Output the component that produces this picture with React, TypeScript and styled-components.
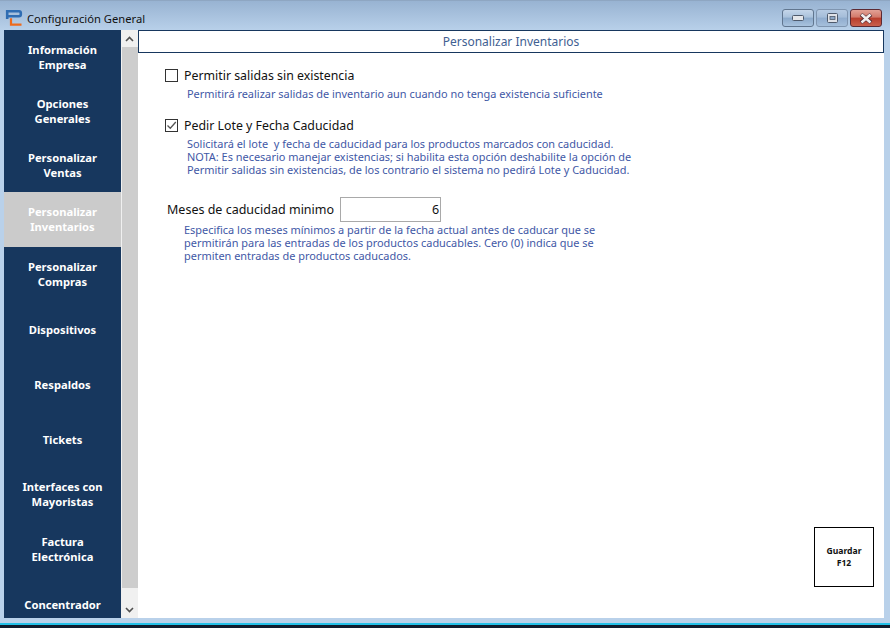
import React from "react";
import styled, { createGlobalStyle } from "styled-components";

const Global = createGlobalStyle`
  html, body { margin: 0; padding: 0; height: 100%; overflow: hidden; background: #0f1b2d; }
  #root { height: 628px; }
  * { box-sizing: border-box; }
`;

const Win = styled.div`
  width: 890px; height: 628px; display: flex; flex-direction: column;
  font-family: "Noto Sans", "DejaVu Sans", sans-serif; overflow: hidden;
`;
const Frame = styled.div`
  height: 623px; display: flex; flex-direction: column; padding: 0 6px 5px 4px;
  background: linear-gradient(180deg, #98b3d2 0, #b9d1ea 30px, #b9d1ea 100%);
  border-top: 1px solid #8ea6c2;
`;
const Taskline = styled.div`
  height: 2px; background: #22c0e8;
`;
const TitleBar = styled.div`
  height: 29px; display: flex; align-items: flex-start; flex: none; margin-left: 1px; gap: 4px;
`;
const Logo = styled.svg`
  flex: none; margin-top: 9px;
`;
const Title = styled.span`
  font-size: 11.2px; line-height: 16px; margin-top: 10px; color: #111; font-family: "Noto Sans", sans-serif; flex: 1;
`;
const Controls = styled.div`
  display: flex; gap: 2px; margin-top: 8px; margin-right: 2px;
`;
const Ctl = styled.div<{ $kind: "min" | "max" | "close" }>`
  width: 32px; height: 18px; border-radius: 3px;
  display: flex; align-items: center; justify-content: center;
  border: 1px solid ${(p) => (p.$kind === "close" ? "#5c2a33" : p.$kind === "min" ? "#61768f" : "#7f95b0")};
  background: ${(p) =>
    p.$kind === "close"
      ? "linear-gradient(180deg,#e2a196 0,#d2796a 45%,#b83d2c 50%,#c9604c 100%)"
      : p.$kind === "min"
      ? "linear-gradient(180deg,#c5d6ea 0,#aac2dc 45%,#8ba9ca 50%,#a9c3de 100%)"
      : "linear-gradient(180deg,#b7cbe3 0,#a5bdd9 45%,#90acce 50%,#a5bfdb 100%)"};
`;
const Body = styled.div`
  flex: 1; display: flex; min-height: 0;
`;
const Sidebar = styled.nav`
  width: 117px; flex: none; background: #17375e; overflow: hidden; display: flex; flex-direction: column;
`;
const Item = styled.div<{ $active?: boolean; $h: number; $nudge: number }>`
  flex: none; height: ${(p) => p.$h}px; display: flex; align-items: center; justify-content: center;
  text-align: center; font-weight: 700; font-size: 11.2px; line-height: 15px;
  padding: ${(p) => (p.$nudge > 0 ? p.$nudge : 0)}px 2px ${(p) => (p.$nudge < 0 ? -p.$nudge : 0)}px;
  font-family: "Noto Sans", sans-serif;
  color: #fff;
  background: ${(p) => (p.$active ? "#cbcbcb" : "transparent")};
`;
const Scroll = styled.div`
  width: 17px; flex: none; background: #f0f0f0; display: flex; flex-direction: column; align-items: stretch;
`;
const Arrow = styled.div`
  height: 17px; flex: none; display: flex; align-items: center; justify-content: center;
`;
const Thumb = styled.div`
  flex: 1; background: #cdcdcd; margin: 0 0 13px 1px;
`;
const Main = styled.main`
  flex: 1; min-width: 0; background: #fff; display: flex; flex-direction: column;
`;
const Header = styled.div`
  height: 23px; flex: none; border: 1px solid #17375e; color: #3f5f92; font-size: 12px;
  display: flex; align-items: center; justify-content: center;
`;
const Content = styled.div`
  flex: 1; display: flex; flex-direction: column; padding: 13px 10px 31px 27px; min-height: 0;
`;
const CheckRow = styled.div`
  display: flex; align-items: center; gap: 6px; height: 18px; font-size: 12.35px; color: #111;
`;
const Box = styled.span`
  width: 13px; height: 13px; border: 1px solid #333; background: #fff; display: flex; flex: none; align-items: center; justify-content: center;
`;
const Help = styled.p<{ $indent: number; $top: number; $bottom: number }>`
  margin: ${(p) => p.$top}px 0 ${(p) => p.$bottom}px ${(p) => p.$indent}px; font-size: 10.95px; line-height: 13px;
  color: #3f58a6; white-space: pre;
`;
const FieldRow = styled.div`
  display: flex; align-items: center; margin-left: 2px; gap: 6px; font-size: 12.5px; color: #111; height: 25px;
`;
const Input = styled.div`
  width: 101px; height: 25px; border: 1px solid #a9a9a9; background: #fff; display: flex; align-items: center;
  justify-content: flex-end; padding-right: 1px; font-size: 12.5px; color: #111;
`;
const Save = styled.button`
  margin-top: auto; align-self: flex-end; width: 60px; height: 60px; background: #fff; border: 1px solid #000;
  font: 700 8.6px/12px "Noto Sans", sans-serif; color: #111; padding: 0;
`;

const items: [string, number, number, boolean?][] = [
  ["Información\nEmpresa", 54, 0], ["Opciones\nGenerales", 54, 0], ["Personalizar\nVentas", 54, 0],
  ["Personalizar\nInventarios", 55, -2, true], ["Personalizar\nCompras", 54, 0], ["Dispositivos", 55, 2],
  ["Respaldos", 55, 2], ["Tickets", 55, 2], ["Interfaces con\nMayoristas", 55, 0], ["Factura\nElectrónica", 55, 0], ["Concentrador", 55, 2],
];

const Multi = ({ t }: { t: string }) => (
  <span>{t.split("\n").map((l, i) => <React.Fragment key={i}>{i > 0 && <br />}{l}</React.Fragment>)}</span>
);

export default function App() {
  return (
    <Win>
      <Global />
      <Frame>
        <TitleBar>
          <Logo width="18" height="18" viewBox="0 0 18 18" fill="none">
            <path d="M2.2 9V1.3H14Q15.8 1.3 15.8 3V4.6Q15.8 6.3 14 6.3H2.2" stroke="#2f6db3" strokeWidth="2.6" />
            <path d="M6 8.2V14.6H16.5" stroke="#ee6a1c" strokeWidth="2.2" />
          </Logo>
          <Title>Configuración General</Title>
          <Controls>
            <Ctl $kind="min">
              <svg width="12" height="6" viewBox="0 0 12 6"><rect x=".5" y=".5" width="11" height="5" rx="1" fill="#e4e6ea" stroke="#4e5a6c" /></svg>
            </Ctl>
            <Ctl $kind="max">
              <svg width="11" height="10" viewBox="0 0 11 10"><rect x=".5" y=".5" width="10" height="9" rx="1" fill="#dfe2e8" stroke="#4e5a6c" /><rect x="3" y="3.5" width="5" height="3" fill="#8da7c6" stroke="#4e5a6c" strokeWidth=".8" /></svg>
            </Ctl>
            <Ctl $kind="close">
              <svg width="14" height="11" viewBox="0 0 14 11"><path d="M2 1.5L12 9.5M12 1.5L2 9.5" stroke="#4a2630" strokeWidth="4" /><path d="M2.5 1.5L11.5 9.5M11.5 1.5L2.5 9.5" stroke="#f3eeee" strokeWidth="2.6" /></svg>
            </Ctl>
          </Controls>
        </TitleBar>
        <Body>
          <Sidebar>
            {items.map(([t, h, n, a]) => (
              <Item key={t} $h={h} $nudge={n} $active={a}><Multi t={t} /></Item>
            ))}
          </Sidebar>
          <Scroll>
            <Arrow><svg width="9" height="6" viewBox="0 0 9 6"><path d="M1 5L4.5 1.5L8 5" fill="none" stroke="#505050" strokeWidth="1.6" /></svg></Arrow>
            <Thumb />
            <Arrow><svg width="9" height="6" viewBox="0 0 9 6"><path d="M1 1L4.5 4.5L8 1" fill="none" stroke="#505050" strokeWidth="1.6" /></svg></Arrow>
          </Scroll>
          <Main>
            <Header>Personalizar Inventarios</Header>
            <Content>
              <CheckRow><Box />Permitir salidas sin existencia</CheckRow>
              <Help $indent={22} $top={3} $bottom={16}>Permitirá realizar salidas de inventario aun cuando no tenga existencia suficiente</Help>
              <CheckRow>
                <Box><svg width="11" height="11" viewBox="0 0 11 11"><path d="M1.5 5.5L4.3 8.3L9.8 2" fill="none" stroke="#555" strokeWidth="1.3" /></svg></Box>
                Pedir Lote y Fecha Caducidad
              </CheckRow>
              <Help $indent={22} $top={3} $bottom={21}>{"Solicitará el lote  y fecha de caducidad para los productos marcados con caducidad.\nNOTA: Es necesario manejar existencias; si habilita esta opción deshabilite la opción de\nPermitir salidas sin existencias, de los contrario el sistema no pedirá Lote y Caducidad."}</Help>
              <FieldRow>Meses de caducidad minimo<Input>6</Input></FieldRow>
              <Help $indent={19} $top={1} $bottom={0}>{"Especifica los meses mínimos a partir de la fecha actual antes de caducar que se\npermitirán para las entradas de los productos caducables. Cero (0) indica que se\npermiten entradas de productos caducados."}</Help>
              <Save>Guardar<br />F12</Save>
            </Content>
          </Main>
        </Body>
      </Frame>
      <Taskline />
    </Win>
  );
}
